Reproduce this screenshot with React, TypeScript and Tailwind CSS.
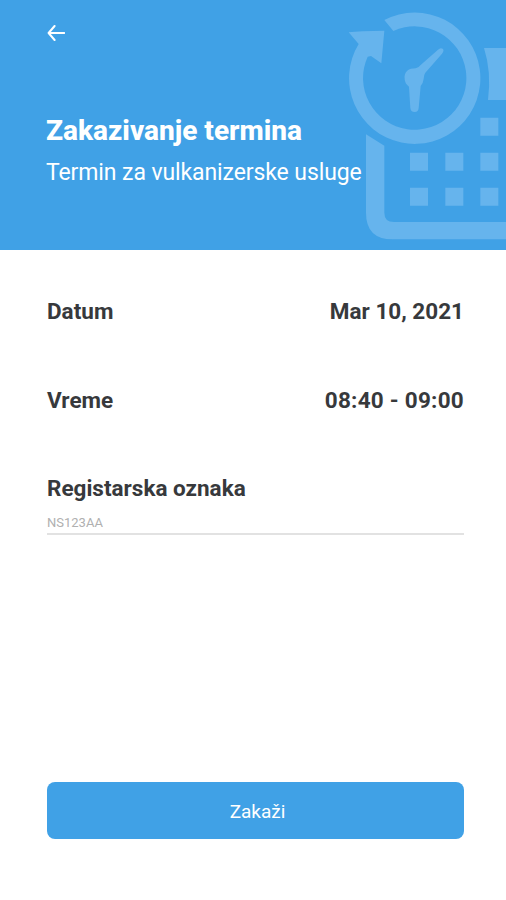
import type { ReactNode } from 'react'

function BackIcon() {
  return (
    <svg viewBox="0 0 18 16" className="h-4 w-[18px]" fill="none" stroke="currentColor" strokeWidth="2" strokeLinecap="round" strokeLinejoin="round">
      <path d="M17.4 8H1.6M7.6 1 1.6 8l6 7" />
    </svg>
  )
}

function CalendarClock() {
  return (
    <svg viewBox="0 0 510 750" className="absolute top-0 right-0 h-[250px] w-[170px] text-[#66b4ed]" fill="currentColor">
      <path d="M145 60A197 197 0 1 1 68 132L38 97Q70 92 145 92L136 190L105 168L95 170A155 155 0 1 0 172 93Z" />
      <path d="M206 238C203 214 219 205 239 205Q247 204 254 195L306 149Q314 141 321 147Q325 152 318 161L268 218Q264 223 263 236Q262 248 254 258L248 324Q247 336 236 336Q224 336 223 324L219 260Q207 252 206 238Z" />
      <path d="M90 403L145 437V638Q145 666 174 666H510V718H170Q90 718 90 638Z" />
      <path d="M444 144H510V300H456Q467 216 444 144Z" />
      <path d="M433 353h54v54h-54zM222 458h54v54h-54zM328 458h54v54h-54zM433 458h54v54h-54zM222 563h54v54h-54zM328 563h54v54h-54zM433 563h54v54h-54z" />
    </svg>
  )
}

function Row({ label, children }: { label: string; children: ReactNode }) {
  return (
    <div className="flex items-center justify-between text-[22.5px] leading-7 font-bold">
      <span>{label}</span>
      {children}
    </div>
  )
}

export default function App() {
  return (
    <div className="flex h-[900px] w-[506px] flex-col bg-white font-['Roboto',sans-serif] text-[#37393c]">
      <header className="relative h-[250px] bg-[#40a1e6] pt-[25px] pl-[47px] text-white">
        <CalendarClock />
        <button className="relative block" aria-label="Nazad">
          <BackIcon />
        </button>
        <h1 className="relative mt-[74px] -ml-px text-[28px] leading-8 font-extrabold">Zakazivanje termina</h1>
        <p className="relative mt-2.5 -ml-px text-[23px] leading-8 tracking-[-0.1px]">Termin za vulkanizerske usluge</p>
      </header>

      <main className="flex flex-1 flex-col pt-[47px] pr-[42px] pb-[61px] pl-[47px]">
        <Row label="Datum">
          <span>Mar 10, 2021</span>
        </Row>
        <div className="mt-[61px]">
          <Row label="Vreme">
            <span className="tracking-[0.25px]">08:40 - 09:00</span>
          </Row>
        </div>
        <label className="mt-[60px] block">
          <span className="block text-[22.5px] leading-7 font-bold">Registarska oznaka</span>
          <input
            placeholder="NS123AA"
            className="mt-2.5 block h-[23px] w-full border-b-2 border-[#e2e2e2] pb-px text-[13px] outline-none placeholder:text-[#b0b0b0]"
          />
        </label>
        <button className="mt-auto h-[57px] w-[417px] rounded-lg bg-[#40a1e6] pt-1 pl-1 text-[19px] text-white">Zakaži</button>
      </main>
    </div>
  )
}
